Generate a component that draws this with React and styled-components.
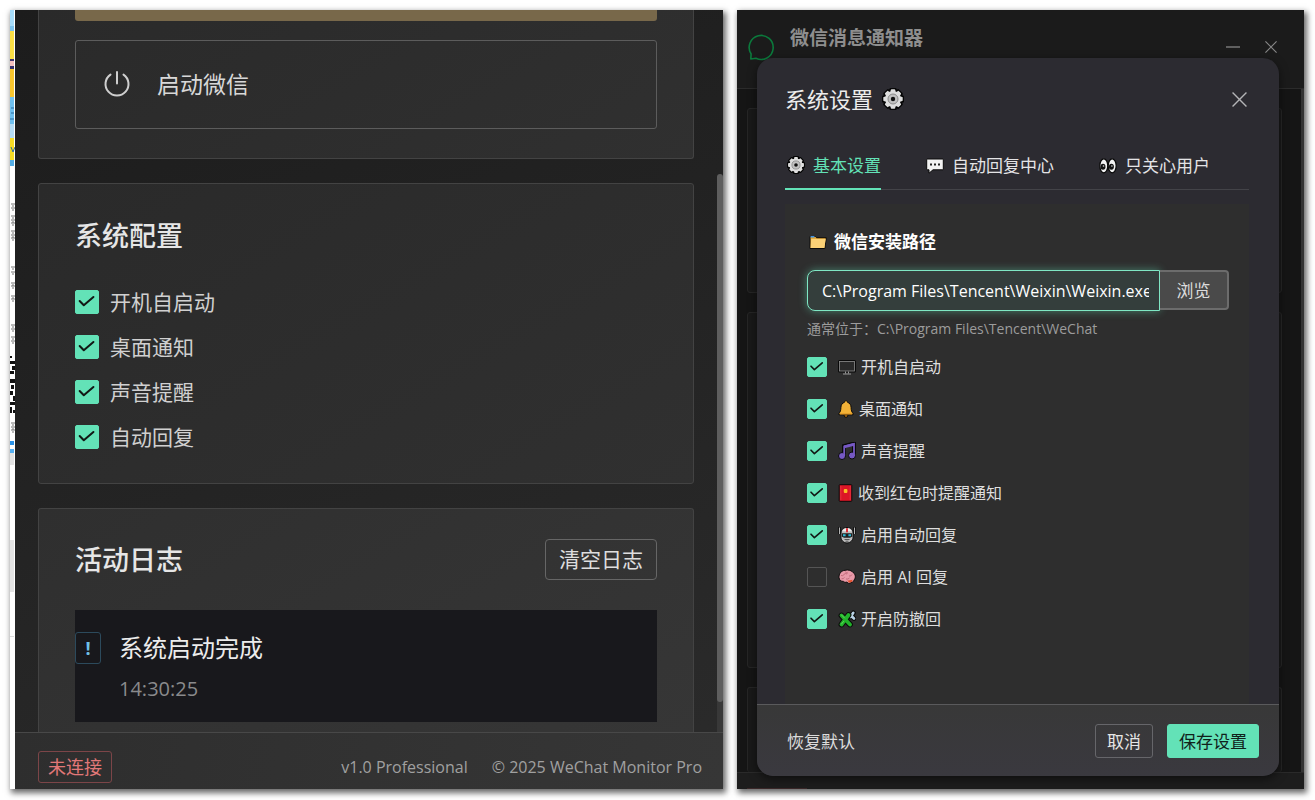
import React from 'react';
import styled, { createGlobalStyle } from 'styled-components';

const GlobalStyle = createGlobalStyle`
  * {
    box-sizing: border-box;
  }
  body {
    margin: 0;
    background: #fff;
    font-family: 'Open Sans', 'Noto Sans CJK SC', sans-serif;
    color: #e6e6e6;
  }
  h1, h2, p, ul {
    margin: 0;
    padding: 0;
    font-weight: 400;
  }
  ul {
    list-style: none;
  }
  button, input {
    font-family: inherit;
    margin: 0;
  }
  button {
    cursor: pointer;
  }
  svg {
    display: block;
    flex: none;
  }
`;

const PageStyle = styled.div`
  min-height: 100vh;
  padding: 10px 11px 11px 10px;
  display: grid;
  grid-template-columns: 713fr 567fr;
  gap: 14px;
`;

/* ---------- shared ---------- */

const Window = styled.section`
  min-width: 0;
  display: flex;
  box-shadow: 2px 3px 6px 1px rgba(0, 0, 0, 0.6);
`;

const tick =
  "url(\"data:image/svg+xml,%3Csvg xmlns='http://www.w3.org/2000/svg' viewBox='0 0 24 24' fill='none' stroke='%23121815' stroke-width='2.2' stroke-linecap='round' stroke-linejoin='round'%3E%3Cpath d='M4 11l4.500 4.500L19 6.500'/%3E%3C/svg%3E\")";

const Checkbox = styled.input.attrs({ type: 'checkbox' })`
  appearance: none;
  flex: none;
  width: ${(p) => p.$size}px;
  height: ${(p) => p.$size}px;
  border: 1px solid #555;
  border-radius: 2px;
  &:checked {
    border-color: #63e2b7;
    background: #63e2b7 ${tick} center / contain no-repeat;
  }
`;

/* ---------- monitor window ---------- */

const Monitor = styled.div`
  flex: 1;
  min-width: 0;
  display: flex;
  flex-direction: column;
  background: linear-gradient(160deg, #1c1c1c, #2b2b2b);
`;

const MonitorBody = styled.div`
  flex: 1;
  display: flex;
`;

const Cards = styled.main`
  flex: 1;
  min-width: 0;
  padding: 0 23px;
  display: flex;
  flex-direction: column;
  gap: 24px;
`;

const Card = styled.section`
  padding: 34px 36px;
  border: 1px solid #434343;
  border-radius: 3px;
  background: linear-gradient(150deg, #2a2a2a, #303030);
`;

const ActionCard = styled(Card)`
  padding: 0 36px 29px;
  border-top: 0;
  border-radius: 0 0 3px 3px;
`;

const LogCard = styled(Card)`
  flex: 1;
  padding: 30px 36px 10px;
  border-bottom: 0;
  border-radius: 3px 3px 0 0;
  background: linear-gradient(150deg, #2f2f2f, #363636);
`;

const GoldBar = styled.div`
  height: 11px;
  margin-bottom: 19px;
  border-radius: 0 0 3px 3px;
  background: #78684a;
`;

const StartButton = styled.button`
  width: 100%;
  height: 89px;
  padding: 0 27px 4px;
  display: flex;
  align-items: center;
  gap: 26px;
  border: 1px solid #5c5c5c;
  border-radius: 3px;
  background: transparent;
  color: #d8d8d8;
  font-size: 23px;
`;

const CardTitle = styled.h2`
  font-size: 27px;
  line-height: 36px;
  font-weight: 500;
`;

const CardHead = styled.div`
  display: flex;
  align-items: center;
  justify-content: space-between;
  margin-bottom: 30px;
`;

const ConfigList = styled.ul`
  margin-top: 36px;
  display: flex;
  flex-direction: column;
  gap: 21px;
`;

const ConfigItem = styled.label`
  display: flex;
  align-items: center;
  gap: 11px;
  font-size: 21px;
  line-height: 24px;
  color: #d0d0d0;
`;

const ClearButton = styled.button`
  height: 41px;
  padding: 0 13px 3px;
  border: 1px solid #666;
  border-radius: 4px;
  background: transparent;
  color: #dedede;
  font-size: 21px;
`;

const Log = styled.div`
  display: flex;
  gap: 18px;
  padding: 22px 0 20px;
  background: #18181c;
`;

const LogBadge = styled.span`
  width: 26px;
  height: 32px;
  border: 1px solid #2c4a5c;
  border-radius: 3px;
  color: #70c0e8;
  font-size: 18px;
  font-weight: 700;
  line-height: 30px;
  text-align: center;
`;

const LogText = styled.p`
  font-size: 24px;
  line-height: 32px;
  margin-bottom: 12px;
  color: #ececec;
`;

const LogTime = styled.time`
  display: block;
  font-size: 20px;
  line-height: 26px;
  color: #8a8a8c;
`;

const Scrollbar = styled.div`
  width: 6px;
  display: flex;
  padding: 164px 0 30px;
  background: linear-gradient(transparent 60%, #383838 60%);
`;

const Thumb = styled.div`
  flex: 1;
  border-radius: 3px;
  background: #5e5e5e;
`;

const StatusBar = styled.footer`
  display: flex;
  align-items: center;
  gap: 24px;
  padding: 18px 21px 6px 23px;
  border-top: 1px solid #484848;
  background: linear-gradient(100deg, #2e2e2e, #363636);
  color: #a0a0a0;
  font-size: 16px;
  line-height: 32px;
`;

const StatusTag = styled.span`
  margin-right: auto;
  padding: 0 9px;
  border: 1px solid #7c4548;
  border-radius: 3px;
  color: #e27878;
  font-size: 18px;
  line-height: 30px;
`;

const configItems = ['开机自启动', '桌面通知', '声音提醒', '自动回复'];

const stripParts = [
  [0, 16, '#a6dcfa'],
  [16, 5, '#7cc3ee'],
  [21, 28, '#fbdf45'],
  [49, 2, '#3d3470'],
  [51, 5, '#f4c0bd'],
  [56, 3, '#34306a'],
  [59, 28, '#f8c62e'],
  [87, 40, '#6fc1f0'],
  [114, 14, '#b5ddf6'],
  [128, 22, '#f6dc25'],
  [150, 6, '#54aee6'],
  [440, 15, '#e3e3e3'],
  [431, 4, '#2b93e8'],
  [439, 4, '#55b0f2'],
  [530, 52, '#e4e4e4'],
  [626, 1, '#dcdcdc'],
];

const stripMarks = [
  194, 198, 206, 210, 213, 221, 225, 228, 257, 262, 273, 276, 286, 289, 315, 319,
  327, 331, 413, 417, 420,
];

const EdgeStrip = () => (
  <svg width="5" height="640" viewBox="0 0 5 640" aria-hidden="true">
    {stripParts.map(([y, h, fill]) => (
      <rect key={y} y={y} width="4" height={h} fill={fill} />
    ))}
    <path d="M1 98h3M1 103h3M0 109h4M1 137l2 5 2-5" stroke="#2d6ca2" fill="none" />
    {stripMarks.map((y) => (
      <path key={y} d={`M1 ${y}h4M2 ${y + 2}h2`} stroke="#777" />
    ))}
    <path
      d="M0 346h2v2h-2zM0 351h5v3h-5zM2 356h3v4h-3zM0 361h4v3h-4zM0 369h5v4h-5zM1 375h3v4h-3zM0 381h3v4h-3zM3 386h2v5h-2zM0 392h5v3h-5zM0 397h2v6h-2zM3 400h2v3h-2z"
      fill="#111"
    />
  </svg>
);

const MonitorWindow = () => (
  <Window>
    <EdgeStrip />
    <Monitor>
      <MonitorBody>
        <Cards>
          <ActionCard>
            <GoldBar />
            <StartButton type="button">
              <svg width="28" height="28" viewBox="0 0 28 28" fill="none" stroke="#cfcfcf" strokeWidth="2" strokeLinecap="round">
                <path d="M14 3v11.500M7.500 5.600a11.500 11.500 0 1 0 13 0" />
              </svg>
              启动微信
            </StartButton>
          </ActionCard>
          <Card>
            <CardTitle>系统配置</CardTitle>
            <ConfigList>
              {configItems.map((text) => (
                <li key={text}>
                  <ConfigItem>
                    <Checkbox $size={24} defaultChecked />
                    {text}
                  </ConfigItem>
                </li>
              ))}
            </ConfigList>
          </Card>
          <LogCard>
            <CardHead>
              <CardTitle>活动日志</CardTitle>
              <ClearButton type="button">清空日志</ClearButton>
            </CardHead>
            <Log>
              <LogBadge>!</LogBadge>
              <div>
                <LogText>系统启动完成</LogText>
                <LogTime>14:30:25</LogTime>
              </div>
            </Log>
          </LogCard>
        </Cards>
        <Scrollbar>
          <Thumb />
        </Scrollbar>
      </MonitorBody>
      <StatusBar>
        <StatusTag>未连接</StatusTag>
        <span>v1.0 Professional</span>
        <span>© 2025 WeChat Monitor Pro</span>
      </StatusBar>
    </Monitor>
  </Window>
);

/* ---------- notifier window ---------- */

const Notifier = styled(Window)`
  position: relative;
  flex-direction: column;
  background: #151515;
`;

const TitleBar = styled.header`
  height: 79px;
  padding: 0 27px 4px 11px;
  display: flex;
  align-items: center;
  border-bottom: 1px solid #2b2b2b;
  background: #1b1b1b;
`;

const AppTitle = styled.h1`
  align-self: flex-start;
  margin: 14px auto 0 15px;
  font-size: 19px;
  line-height: 28px;
  font-weight: 700;
  color: #8e8e8e;
`;

const IconButton = styled.button`
  padding: 0;
  border: 0;
  background: transparent;
`;

const WindowButtons = styled.div`
  display: flex;
  align-items: center;
  gap: 25px;
`;

const Backdrop = styled.div`
  flex: 1;
  display: grid;
  grid-template-rows: 185px 356px 1fr;
  gap: 19px;
  padding: 19px 19px 0 10px;
  border-right: 3px solid #333;
`;

const GhostCard = styled.div`
  border: 1px solid #262626;
  border-radius: 3px;
  background: #191919;
  &:last-child {
    border-bottom: 0;
  }
`;

const GhostFooter = styled.div`
  display: flex;
  align-items: flex-end;
  height: 17px;
  padding: 0 10px;
  border-top: 1px solid #2a2a2a;
  background: #1d1d1d;
`;

const GhostTag = styled.div`
  width: 60px;
  border-top: 1px solid #3a2829;
`;

const Modal = styled.div`
  position: absolute;
  inset: 48px 25px 13px 20px;
  display: flex;
  flex-direction: column;
  overflow: hidden;
  border-radius: 16px;
  background: #2c2b31;
  box-shadow: 0 3px 10px rgba(0, 0, 0, 0.5);
`;

const ModalHead = styled.div`
  display: flex;
  align-items: center;
  justify-content: space-between;
  padding: 25px 32px 27px 28px;
`;

const ModalTitle = styled.h2`
  display: flex;
  align-items: center;
  gap: 9px;
  font-size: 22px;
  line-height: 32px;
  color: #ececec;
`;

const Tabs = styled.div`
  display: flex;
  gap: 43px;
  margin: 0 30px 0 28px;
  border-bottom: 1px solid #434348;
`;

const Tab = styled.button`
  display: flex;
  align-items: center;
  gap: 8px;
  height: 48px;
  padding: 0 0 1px 2px;
  margin-bottom: -1px;
  border: 0;
  border-bottom: 2px solid ${(p) => (p.$active ? '#63e2b7' : 'transparent')};
  background: transparent;
  color: ${(p) => (p.$active ? '#63e2b7' : '#e4e4e6')};
  font-size: 17px;
`;

const Panel = styled.div`
  flex: 1;
  margin: 14px 30px 0 28px;
  padding: 24px 20px 0 22px;
  background: #2e2e2e;
`;

const FieldLabel = styled.label`
  display: flex;
  align-items: center;
  gap: 7px;
  padding-left: 2px;
  font-size: 17px;
  line-height: 28px;
  font-weight: 700;
  color: #fff;
`;

const PathRow = styled.div`
  display: flex;
  margin-top: 14px;
`;

const PathInput = styled.input`
  flex: 1;
  min-width: 0;
  height: 41px;
  padding: 0 10px 0 14px;
  border: 1px solid #7fe7c4;
  border-radius: 8px 0 0 8px;
  outline: 0;
  background: #343e3c;
  box-shadow: 0 0 8px rgba(99, 226, 183, 0.45);
  color: #fff;
  font-size: 16px;
`;

const BrowseButton = styled.button`
  width: 69px;
  height: 40px;
  padding: 0 0 2px;
  border: 2px solid #6c6c6c;
  border-left: 0;
  border-radius: 0 4px 4px 0;
  background: #4a4a4a;
  color: #dcdcdc;
  font-size: 17px;
`;

const Hint = styled.p`
  margin-top: 7px;
  font-size: 14px;
  line-height: 22px;
  color: #9c9c9c;
`;

const Options = styled.ul`
  margin-top: 17px;
  display: flex;
  flex-direction: column;
  gap: 22px;
`;

const Option = styled.label`
  display: flex;
  align-items: center;
  gap: 11px;
  font-size: 16px;
  line-height: 20px;
  color: #dedede;
`;

const OptionText = styled.span`
  display: flex;
  align-items: center;
  gap: 5px;
`;

const ModalFoot = styled.div`
  display: flex;
  align-items: center;
  gap: 14px;
  padding: 19px 20px 18px 28px;
  border-top: 1px solid #5a5a5c;
  background: linear-gradient(#383838, #3a393f);
`;

const FootButton = styled.button`
  height: 34px;
  padding: 0 11px 2px;
  border: 1px solid ${(p) => (p.$primary ? '#63e2b7' : '#66666a')};
  border-radius: 3px;
  background: ${(p) => (p.$primary ? '#63e2b7' : 'transparent')};
  color: ${(p) => (p.$primary ? '#10211b' : '#e6e6e6')};
  font-size: 17px;
`;

const ResetButton = styled.button`
  margin-right: auto;
  padding: 0 2px 2px;
  border: 0;
  background: transparent;
  color: #dcdcdc;
  font-size: 17px;
`;

const Close = ({ size, color }) => (
  <svg width={size} height={size} viewBox="0 0 14 14" fill="none" stroke={color} strokeWidth="1.3">
    <path d="M.5.5l13 13M13.5.5l-13 13" />
  </svg>
);

const teeth = [0, 45, 90, 135, 180, 225, 270, 315];

const Gear = ({ size }) => (
  <svg width={size} height={size} viewBox="0 0 22 22">
    <g fill="#050505">
      {teeth.map((a) => (
        <rect key={a} x="7.2" y="0" width="7.6" height="7" rx="1.6" transform={`rotate(${a} 11 11)`} />
      ))}
      <circle cx="11" cy="11" r="9.3" />
    </g>
    <g fill="#dedede">
      {teeth.map((a) => (
        <rect key={a} x="8.7" y="1.3" width="4.6" height="5" rx="1" transform={`rotate(${a} 11 11)`} />
      ))}
      <circle cx="11" cy="11" r="8" />
    </g>
    <circle cx="11" cy="11" r="5" fill="#c2c2c2" stroke="#8b8b8b" strokeWidth="1" />
    <circle cx="11" cy="11" r="2.2" fill="#111" />
  </svg>
);

const Bubble = () => (
  <svg width="18" height="18" viewBox="0 0 18 18">
    <path d="M1.500 3h15q.8 0 .8.8v9.200q0 .8-.8.8H7l-4 3.400v-3.400H1.500q-.8 0-.8-.8V3.800q0-.8.8-.8z" fill="#f2f2f2" stroke="#0a0a0a" />
    <path d="M4 7.500h2v2H4zM8 7.500h2v2H8zM12 7.500h2v2h-2z" fill="#222" />
  </svg>
);

const Eyes = () => (
  <svg width="18" height="18" viewBox="0 0 18 18">
    <ellipse cx="4.800" cy="9.800" rx="4" ry="7" fill="#f3f3f3" stroke="#0a0a0a" strokeWidth="1.300" />
    <ellipse cx="13.200" cy="9.800" rx="4" ry="7" fill="#f3f3f3" stroke="#0a0a0a" strokeWidth="1.300" />
    <ellipse cx="4" cy="10.800" rx="2.500" ry="3" fill="#111" />
    <ellipse cx="12.400" cy="10.800" rx="2.500" ry="3" fill="#111" />
    <circle cx="4.500" cy="10" r=".8" fill="#ddd" />
    <circle cx="12.900" cy="10" r=".8" fill="#ddd" />
  </svg>
);

const Folder = () => (
  <svg width="18" height="18" viewBox="0 0 18 18">
    <path d="M1 15.500V3.500h5.500l1 1.200H17.300L15.800 15.500z" fill="#e3a93b" stroke="#0a0a0a" strokeLinejoin="round" />
    <path d="M1.500 3h4v1.400h-4z" fill="#3f8fe0" />
    <path d="M2.200 6h14.500l-1.300 9H1.600z" fill="#fbd176" />
  </svg>
);

const Computer = () => (
  <svg width="18" height="18" viewBox="0 0 18 18">
    <rect x="1" y="3" width="16" height="10.500" rx=".6" fill="#262626" stroke="#080808" strokeWidth="2" />
    <rect x="1.500" y="3.500" width="15" height="9.500" fill="#2a2a2a" stroke="#8e8e8e" strokeWidth=".8" />
    <path d="M7.500 13.500v2M10.500 13.500v2M5 16h8" stroke="#9a9a9a" />
  </svg>
);

const Bell = () => (
  <svg width="16" height="18" viewBox="0 0 16 18">
    <circle cx="8" cy="15.500" r="1.800" fill="#c97c12" stroke="#0a0a0a" />
    <path d="M8 .8c1 0 1.500.6 1.500 1.500 2.300.7 3.500 2.600 3.600 5.200.1 3 .5 4.200 1.900 5.900v1.400H1v-1.400c1.400-1.700 1.800-2.900 1.900-5.900C3 4.900 4.200 3 6.500 2.300 6.500 1.400 7 .8 8 .8z" fill="#f3b237" stroke="#0a0a0a" strokeLinejoin="round" />
    <path d="M2 14h12" stroke="#d88c1d" />
  </svg>
);

const Notes = () => (
  <svg width="18" height="18" viewBox="0 0 18 18">
    <path d="M6 14V4l10-2.500v11" fill="none" stroke="#0a0a0a" strokeWidth="4" />
    <circle cx="4" cy="14" r="3.500" fill="#7659c4" stroke="#0a0a0a" />
    <circle cx="14" cy="13.500" r="3.500" fill="#7659c4" stroke="#0a0a0a" />
    <path d="M6.200 14V4.500L16 2v11.500" fill="none" stroke="#7659c4" strokeWidth="1.800" />
    <path d="M6.200 4.800L16 2.400" stroke="#7659c4" strokeWidth="2.800" />
  </svg>
);

const RedPacket = () => (
  <svg width="15" height="18" viewBox="0 0 15 18">
    <rect x="1.200" y=".7" width="12.600" height="16.600" rx=".8" fill="#dc1626" stroke="#0a0a0a" />
    <path d="M2.800 2v14M12.200 2v14" stroke="#ef4450" strokeWidth=".6" />
    <rect x="5.800" y="5" width="3.600" height="4" rx="1" fill="#fbbd25" />
  </svg>
);

const Robot = () => (
  <svg width="18" height="18" viewBox="0 0 18 18">
    <path d="M1.500 1v7M16.500 1v7" stroke="#0a0a0a" strokeWidth="2.400" />
    <path d="M1.500 1.500V8M16.500 1.500V8" stroke="#b4b4b4" />
    <path d="M9 1.500c4 0 6 2.300 6 5.500v4.500c0 2.500-2.700 5.500-6 5.500s-6-3-6-5.500V7c0-3.200 2-5.500 6-5.500z" fill="#bdbdbd" stroke="#0a0a0a" />
    <path d="M4.500 5q1-2.500 3.500-2.700v3H4.500zM13.500 5q-1-2.500-3.500-2.700v3h3.500z" fill="#ececec" />
    <path d="M8 2.300h2v3.900H8z" fill="#e02f38" />
    <path d="M4 7.200h10v3.600l-2 1H6l-2-1z" fill="#202020" />
    <path d="M5 8.200h2.600v2H5zM10.400 8.200H13v2h-2.600z" fill="#2cb9d6" />
    <path d="M6.500 13.500h5M7.500 15.200h3" stroke="#555" />
  </svg>
);

const Brain = () => (
  <svg width="18" height="18" viewBox="0 0 18 18">
    <path d="M1 9.500C.8 5.800 3.200 2.600 7 2.300c3-1 7 .2 8.500 2.600 2.200 1.600 2.400 5.200.6 7-.3 1.700-1.500 2.600-3 2.600-1.300 1.300-3.300 1.200-4.200-.5-1.300.6-2.700.4-3.400-.6C3 13.600 1.200 12 1 9.500z" fill="#e99aa9" stroke="#0a0a0a" />
    <path d="M9 12.800l5.500-1-.5 2-2.300 1z" fill="#e3532f" />
    <path d="M3 7.500q2 .8 3-1t3-.5M7.500 3.500q.5 2 2.500 1.500M11 8q2 .6 3-1.500M3.500 10.800q2 .2 3-1.300M8 11q2 .6 3.500-1" fill="none" stroke="#bd6577" strokeWidth=".9" />
  </svg>
);

const Puzzle = () => (
  <svg width="18" height="18" viewBox="0 0 18 18" fill="none" strokeLinecap="round">
    <path d="M12.500 7L15.500 2.800M12.500 5L16 8.500" stroke="#0a0a0a" strokeWidth="4.600" />
    <path d="M12.500 7L15.300 2.800M12.500 5L16 8.500" stroke="#b9d2e4" strokeWidth="2.600" />
    <path d="M3.500 5.500l8.500 9M3.500 14.500L10.500 5" stroke="#0a0a0a" strokeWidth="5.800" />
    <path d="M3.500 5.500l8.500 9M3.500 14.500L10.500 5" stroke="#22b32b" strokeWidth="3.800" />
    <path d="M3.500 5l3 3M3.500 14l2-2.500" stroke="#5fd858" />
  </svg>
);

const options = [
  { text: '开机自启动', Icon: Computer, on: true },
  { text: '桌面通知', Icon: Bell, on: true },
  { text: '声音提醒', Icon: Notes, on: true },
  { text: '收到红包时提醒通知', Icon: RedPacket, on: true },
  { text: '启用自动回复', Icon: Robot, on: true },
  { text: '启用 AI 回复', Icon: Brain, on: false },
  { text: '开启防撤回', Icon: Puzzle, on: true },
];

const SettingsModal = () => (
  <Modal role="dialog" aria-labelledby="settings-title">
    <ModalHead>
      <ModalTitle id="settings-title">
        系统设置
        <Gear size={22} />
      </ModalTitle>
      <IconButton type="button" aria-label="关闭">
        <Close size={15} color="#b4b4b6" />
      </IconButton>
    </ModalHead>
    <Tabs role="tablist">
      <Tab type="button" role="tab" aria-selected="true" $active>
        <Gear size={18} />
        基本设置
      </Tab>
      <Tab type="button" role="tab" aria-selected="false">
        <Bubble />
        自动回复中心
      </Tab>
      <Tab type="button" role="tab" aria-selected="false">
        <Eyes />
        只关心用户
      </Tab>
    </Tabs>
    <Panel>
      <FieldLabel htmlFor="wechat-path">
        <Folder />
        微信安装路径
      </FieldLabel>
      <PathRow>
        <PathInput id="wechat-path" type="text" defaultValue="C:\Program Files\Tencent\Weixin\Weixin.exe" />
        <BrowseButton type="button">浏览</BrowseButton>
      </PathRow>
      <Hint>通常位于：C:\Program Files\Tencent\WeChat</Hint>
      <Options>
        {options.map(({ text, Icon, on }) => (
          <li key={text}>
            <Option>
              <Checkbox $size={20} defaultChecked={on} />
              <OptionText>
                <Icon />
                {text}
              </OptionText>
            </Option>
          </li>
        ))}
      </Options>
    </Panel>
    <ModalFoot>
      <ResetButton type="button">恢复默认</ResetButton>
      <FootButton type="button">取消</FootButton>
      <FootButton type="button" $primary>
        保存设置
      </FootButton>
    </ModalFoot>
  </Modal>
);

const NotifierWindow = () => (
  <Notifier>
    <TitleBar>
      <svg width="27" height="27" viewBox="0 0 27 27" fill="none" stroke="#0b7a3c" strokeWidth="1.600" strokeLinejoin="round">
        <path d="M2.800 25l.3-5A12 12 0 1 1 8 24.300z" />
      </svg>
      <AppTitle>微信消息通知器</AppTitle>
      <WindowButtons>
        <IconButton type="button" aria-label="最小化">
          <svg width="14" height="14" viewBox="0 0 14 14">
            <path d="M0 7h14" stroke="#777" strokeWidth="1.500" />
          </svg>
        </IconButton>
        <IconButton type="button" aria-label="关闭">
          <Close size={12} color="#888" />
        </IconButton>
      </WindowButtons>
    </TitleBar>
    <Backdrop>
      <GhostCard />
      <GhostCard />
      <GhostCard />
    </Backdrop>
    <GhostFooter>
      <GhostTag />
    </GhostFooter>
    <SettingsModal />
  </Notifier>
);

const App = () => (
  <>
    <GlobalStyle />
    <PageStyle>
      <MonitorWindow />
      <NotifierWindow />
    </PageStyle>
  </>
);

export default App;
